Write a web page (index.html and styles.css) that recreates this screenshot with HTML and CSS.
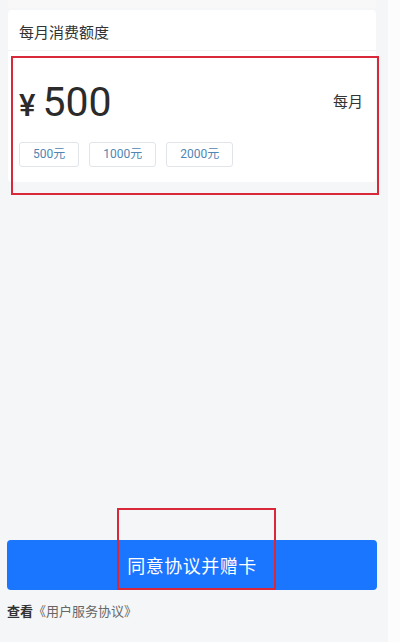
FILE: index.html
```html
<!DOCTYPE html>
<html lang="zh-CN">
<head>
    <meta charset="UTF-8">
    <meta name="viewport" content="width=device-width, initial-scale=1.0">
    <title>每月消费额度</title>
    <link rel="stylesheet" href="styles.css">
</head>
<body>
    <div class="page">
        <div class="main">
            <div class="stub"></div>
            <div class="card">
                <div class="card-head">每月消费额度</div>
                <div class="quota">
                    <div class="amount-row">
                        <div class="amount"><span class="yen">¥</span><span class="num">500</span></div>
                        <div class="period">每月</div>
                    </div>
                    <div class="chips">
                        <span class="chip">500元</span>
                        <span class="chip">1000元</span>
                        <span class="chip">2000元</span>
                    </div>
                </div>
            </div>
            <div class="spacer"></div>
            <button class="agree">同意协议并赠卡</button>
            <div class="note"><b>查看</b>《用户服务协议》</div>
        </div>
        <div class="edge"></div>

        <!-- review marks over the screenshot -->
        <div class="mark mark-quota"></div>
        <div class="mark mark-button"></div>
    </div>
</body>
</html>
```

FILE: styles.css
```css
/* General Styling */
body {
    margin: 0;
    font-family: Roboto, "Noto Sans CJK SC", sans-serif;
    background: #f5f6f8;
    color: #333;
}

.page {
    position: relative;
    display: flex;
    width: 400px;
    height: 642px;
    overflow: hidden;
}

.main {
    flex: 1;
    display: flex;
    flex-direction: column;
}

.edge {
    width: 12px;
    background: #fcfcfd;
}

.stub {
    height: 8px;
    margin: 0 12px 0 8px;
    background: #f8f8f9;
}

/* Card */
.card {
    margin: 2px 12px 0 8px;
    background: #fff;
    border-radius: 4px;
}

.card-head {
    height: 40px;
    line-height: 47px;
    padding-left: 11px;
    font-size: 15px;
    color: #333;
    border-bottom: 1px solid #f2f3f5;
}

.quota {
    padding: 0 13px 15px 11px;
}

.amount-row {
    display: flex;
    align-items: center;
    justify-content: space-between;
    height: 80px;
    margin-top: 11px;
}

.amount {
    display: flex;
    align-items: baseline;
    color: #2b2b2b;
}

.yen {
    font-size: 31px;
    font-weight: 500;
    margin-right: 7px;
}

.num {
    font-size: 41px;
}

.period {
    font-size: 15px;
    color: #333;
    margin-bottom: 4px;
}

.chips {
    display: flex;
    gap: 10px;
}

.chip {
    display: inline-block;
    height: 23px;
    line-height: 23px;
    padding: 0 13px;
    border: 1px solid #e1e5ea;
    border-radius: 3px;
    font-size: 12px;
    color: #4f86b3;
    background: #fff;
}

.spacer {
    flex: 1;
}

/* Button */
.agree {
    height: 50px;
    margin: 0 11px 0 7px;
    border: none;
    border-radius: 4px;
    background: #1a75ff;
    color: #fff;
    font-family: inherit;
    font-size: 18px;
    letter-spacing: 0.5px;
}

.note {
    height: 52px;
    padding-left: 7px;
    padding-top: 13px;
    box-sizing: border-box;
    line-height: 18px;
    font-size: 13px;
    color: #666;
}

.note b {
    color: #333;
    font-weight: bold;
}

/* review marks */
.mark {
    position: absolute;
    border: 2px solid #d9283a;
    box-sizing: border-box;
}

.mark-quota {
    left: 11px;
    top: 56px;
    width: 368px;
    height: 139px;
}

.mark-button {
    left: 117px;
    top: 508px;
    width: 159px;
    height: 82px;
}
```
